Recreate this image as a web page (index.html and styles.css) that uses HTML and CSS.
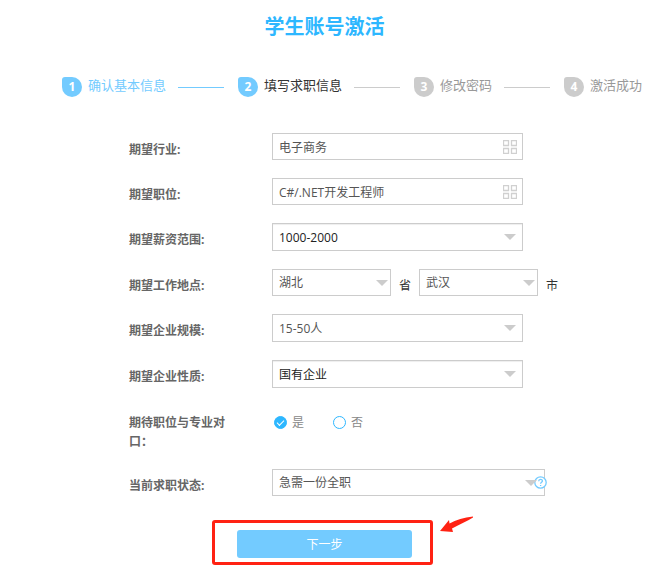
FILE: index.html
```html
<!DOCTYPE html>
<html lang="zh-CN">

<head>
  <meta charset="UTF-8">
  <meta name="viewport" content="width=device-width, initial-scale=1.0">
  <title>学生账号激活</title>
  <link rel="stylesheet" href="styles.css">
</head>

<body>
  <h1>学生账号激活</h1>

  <ol class="steps">
    <li class="done"><i>1</i><span>确认基本信息</span></li>
    <li class="current"><i>2</i><span>填写求职信息</span></li>
    <li><i>3</i><span>修改密码</span></li>
    <li><i>4</i><span>激活成功</span></li>
  </ol>

  <form>
    <div class="row">
      <label class="name" for="industry">期望行业:</label>
      <div class="field">
        <input class="text" type="text" id="industry" value="电子商务">
        <svg class="grid" viewBox="0 0 14 14">
          <path d="M.5.5h5v5h-5zM8.5.5h5v5h-5zM.5 8.5h5v5h-5zM8.5 8.5h5v5h-5z" />
        </svg>
      </div>
    </div>
    <div class="row">
      <label class="name" for="job">期望职位:</label>
      <div class="field">
        <input class="text" type="text" id="job" value="C#/.NET开发工程师">
        <svg class="grid" viewBox="0 0 14 14">
          <path d="M.5.5h5v5h-5zM8.5.5h5v5h-5zM.5 8.5h5v5h-5zM8.5 8.5h5v5h-5z" />
        </svg>
      </div>
    </div>
    <div class="row">
      <label class="name" for="salary">期望薪资范围:</label>
      <div class="field arrow">
        <select class="dark" id="salary">
          <option>1000-2000</option>
        </select>
      </div>
    </div>
    <div class="row">
      <label class="name" for="province">期望工作地点:</label>
      <div class="field arrow small">
        <select id="province">
          <option>湖北</option>
        </select>
      </div>
      <label class="unit" for="province">省</label>
      <div class="field arrow small">
        <select id="city">
          <option>武汉</option>
        </select>
      </div>
      <label class="unit" for="city">市</label>
    </div>
    <div class="row">
      <label class="name" for="scale">期望企业规模:</label>
      <div class="field arrow">
        <select class="tall" id="scale">
          <option>15-50人</option>
        </select>
      </div>
    </div>
    <div class="row">
      <label class="name" for="nature">期望企业性质:</label>
      <div class="field arrow">
        <select class="dark" id="nature">
          <option>国有企业</option>
        </select>
      </div>
    </div>
    <div class="row">
      <span class="name" id="match">期待职位与专业对口：</span>
      <div class="radios" role="radiogroup" aria-labelledby="match">
        <label><input type="radio" name="match" checked>是</label>
        <label><input type="radio" name="match">否</label>
      </div>
    </div>
    <div class="row">
      <label class="name" for="status">当前求职状态:</label>
      <div class="field arrow wide">
        <select id="status">
          <option>急需一份全职</option>
        </select>
        <svg class="help" viewBox="0 0 13 13">
          <circle cx="6.5" cy="6.5" r="5.7" />
          <path d="M4.7 5.2c0-2.5 3.7-2.4 3.7-.2 0 1.3-1.8 1.3-1.8 2.8M6.6 8.9v1.2" />
        </svg>
      </div>
    </div>

    <div class="submit">
      <button type="button">下一步</button>
      <svg class="pointer" viewBox="0 0 34 18">
        <path d="M0 15 9 4 9.500 7.500C16 4 24 1.500 33 .5L33 1.500C27 5 20 8.500 12 12.500L13 16z" />
      </svg>
    </div>
  </form>
</body>

</html>
```

FILE: styles.css
```css
* {
  padding: 0;
  margin: 0;
  box-sizing: border-box;
}

body {
  padding: 13px 18px 9px 0;
  background-color: #fff;
  color: #333;
  font: 12px/19px "Open Sans", "Noto Sans CJK SC", sans-serif;
}

h1 {
  text-align: center;
  font-size: 20px;
  line-height: 28px;
  color: #2db7ff;
}

.steps {
  list-style-type: none;
  display: flex;
  margin: 35px 0 0 62px;
}

.steps li {
  display: flex;
  align-items: center;
  height: 22px;
  color: #999;
  font-size: 13px;
  white-space: nowrap;
}

.steps li:not(:last-child)::after {
  content: "";
  width: 46px;
  height: 1px;
  margin: 0 14px 0 12px;
  background-color: #ccc;
}

.steps i {
  width: 20px;
  height: 20px;
  margin-right: 6px;
  border-radius: 3px 10px 10px 10px;
  background-color: #ccc;
  color: #fff;
  font-size: 12px;
  font-style: normal;
  font-weight: bold;
  line-height: 20px;
  text-align: center;
}

.steps span {
  padding-bottom: 3px;
}

.steps .done {
  color: #73cbff;
}

.steps .done i,
.steps .current i,
.steps li.done:not(:last-child)::after {
  background-color: #73cbff;
}

.steps .current {
  color: #333;
}

form {
  display: flex;
  flex-direction: column;
  gap: 18px;
  margin-top: 35px;
}

.row {
  display: flex;
  align-items: flex-start;
  padding-left: 129px;
}

.name {
  width: 104px;
  margin-right: 39px;
  padding-top: 7px;
  color: #666;
  font-weight: bold;
}

.field {
  position: relative;
  display: flex;
  width: 251px;
}

.wide {
  width: 273px;
}

.small {
  width: 119px;
}

.text,
select {
  appearance: none;
  width: 100%;
  height: 27px;
  padding: 0 6px;
  border: 1px solid #ccc;
  border-radius: 0;
  background-color: #fff;
  color: #555;
  font: inherit;
}

select.tall,
select.dark {
  height: 28px;
}

select.dark {
  color: #222;
  box-shadow: inset 0 1px 1px #eee;
}

.arrow::after {
  content: "";
  position: absolute;
  top: 11px;
  right: 7px;
  border: 6px solid transparent;
  border-top-color: #ccc;
  border-bottom: 0;
  pointer-events: none;
}

.small::after {
  right: 3px;
}

.wide::after {
  right: 8px;
}

.grid {
  position: absolute;
  top: 7px;
  right: 6px;
  width: 14px;
  height: 14px;
  fill: none;
  stroke: #d0d0d0;
  stroke-width: 1.3;
}

.unit {
  width: 28px;
  padding: 7px 8px 0;
}

.radios {
  display: flex;
  gap: 29px;
  padding: 7px 0 0 2px;
  color: #888;
}

.radios label {
  display: flex;
  align-items: center;
  gap: 5px;
}

.radios input {
  appearance: none;
  display: flex;
  width: 13px;
  height: 13px;
  border: 1px solid #2db7ff;
  border-radius: 50%;
}

.radios input:checked {
  background-color: #2db7ff;
}

.radios input:checked::before {
  content: "";
  width: 6px;
  height: 3px;
  margin: 3px auto 0;
  border: solid #fff;
  border-width: 0 0 1px 1px;
  transform: rotate(-45deg);
}

.help {
  position: absolute;
  top: 7px;
  right: -2px;
  width: 13px;
  height: 13px;
  fill: #fff;
  stroke: #73cbff;
  stroke-width: 1.3;
}

.submit {
  position: relative;
  align-self: center;
  margin-top: 16px;
}

.submit::before {
  content: "";
  position: absolute;
  inset: -10px -21px -7px -25px;
  border: 3px solid #ff2213;
  border-radius: 3px;
  pointer-events: none;
}

.submit button {
  display: block;
  width: 175px;
  height: 28px;
  border: 0;
  border-radius: 3px;
  background-color: #73cbff;
  color: #fff;
  font: inherit;
  cursor: pointer;
}

.pointer {
  position: absolute;
  top: -14px;
  left: 203px;
  width: 34px;
  height: 18px;
  fill: #ff2213;
}
```
